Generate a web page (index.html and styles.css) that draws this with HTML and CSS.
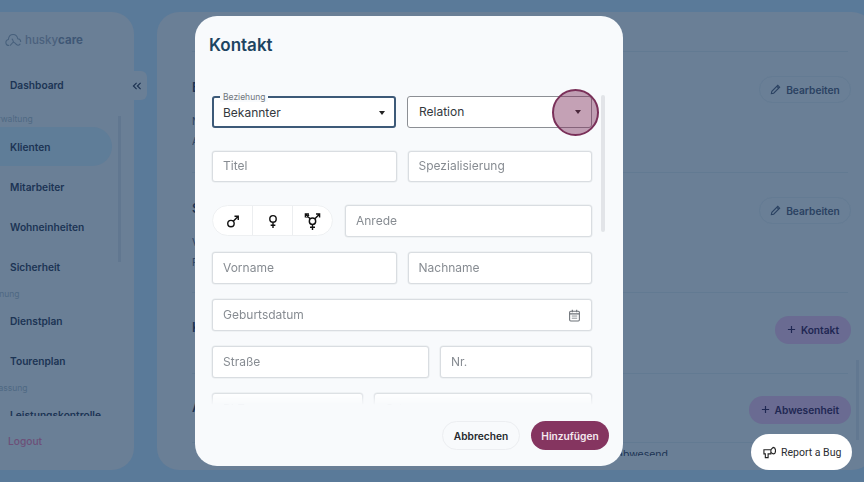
FILE: index.html
```html
<!DOCTYPE html>
<html lang="de">
<head>
    <meta charset="UTF-8">
    <meta name="viewport" content="width=device-width, initial-scale=1.0">
    <title>huskycare - Kontakt</title>
    <link rel="stylesheet" href="styles.css">
</head>
<body>

    <div class="shell">
        <aside class="sidebar">
            <div class="logo">
                <svg class="logo-icon" viewBox="0 0 20 16" fill="none" stroke="#47607c" stroke-width="1.2">
                    <path d="M5 14.5c-2.5 0-4-1.7-4-3.7 0-1.9 1.3-3.2 3-3.5C4.400 4 6.500 1.500 9.500 1.500c3 0 5 2 5.500 5 2 .2 3.500 1.700 3.500 3.800"/>
                    <path d="M6 14.500c1.500-1 2-3 4-4 2 .5 2.500 2.500 4.500 3.500 1.500.5 3-.5 3.500-1.500"/>
                    <path d="M8 6.500c1 .5 1.500 2 2 4"/>
                </svg>
                <span class="logo-text">husky<b>care</b></span>
            </div>
            <nav class="nav">
                <a class="nav-item">Dashboard</a>
                <div class="nav-label first">Verwaltung</div>
                <a class="nav-item active">Klienten</a>
                <a class="nav-item">Mitarbeiter</a>
                <a class="nav-item">Wohneinheiten</a>
                <a class="nav-item">Sicherheit</a>
                <div class="nav-label">Planung</div>
                <a class="nav-item">Dienstplan</a>
                <a class="nav-item">Tourenplan</a>
                <div class="nav-label">Erfassung</div>
                <a class="nav-item">Leistungskontrolle</a>
            </nav>
            <a class="logout">Logout</a>
            <div class="nav-scroll"></div>
            <div class="collapse">
                <svg viewBox="0 0 12 10" fill="none" stroke="#1a3050" stroke-width="1.400">
                    <path d="M5.500 1 1.500 5l4 4M10.500 1l-4 4 4 4"/>
                </svg>
            </div>
        </aside>

        <main class="main">
            <div class="scroller">
                <section class="block block-top"></section>
                <section class="block block-a">
                    <div class="info">
                        <h2>Basisdaten</h2>
                        <p>Name</p>
                        <p>Adresse</p>
                    </div>
                    <button class="btn-edit">
                        <svg viewBox="0 0 12 12" fill="none" stroke="#2b4262" stroke-width="1.200"><path d="M1.500 10.500 2 8 8.500 1.500l2 2L4 10z"/><path d="M7.500 2.500l2 2"/></svg>
                        Bearbeiten
                    </button>
                </section>
                <section class="block block-a">
                    <div class="info">
                        <h2>Stammdaten</h2>
                        <p>Versicherung</p>
                        <p>Pflegegrad</p>
                    </div>
                    <button class="btn-edit">
                        <svg viewBox="0 0 12 12" fill="none" stroke="#2b4262" stroke-width="1.200"><path d="M1.500 10.500 2 8 8.500 1.500l2 2L4 10z"/><path d="M7.500 2.500l2 2"/></svg>
                        Bearbeiten
                    </button>
                </section>
                <section class="block block-b">
                    <div class="info">
                        <h2>Kontakte</h2>
                    </div>
                    <button class="btn-add">
                        <svg viewBox="0 0 10 10" fill="none" stroke="#1f2752" stroke-width="1.300"><path d="M5 1v8M1 5h8"/></svg>
                        Kontakt
                    </button>
                </section>
                <section class="block block-c">
                    <div class="info">
                        <h2>Abwesenheiten</h2>
                    </div>
                    <button class="btn-add">
                        <svg viewBox="0 0 10 10" fill="none" stroke="#1f2752" stroke-width="1.300"><path d="M5 1v8M1 5h8"/></svg>
                        Abwesenheit
                    </button>
                </section>
                <div class="absent-row">abwesend</div>
            </div>
            <div class="main-scroll"></div>
        </main>
    </div>

    <div class="modal">
        <h1>Kontakt</h1>
        <div class="form">
            <div class="row row-first">
                <div class="field select focused">
                    <span class="legend">Beziehung</span>
                    <span>Bekannter</span>
                    <i class="caret"></i>
                </div>
                <div class="field select filled">
                    <span>Relation</span>
                    <i class="caret"></i>
                </div>
            </div>
            <div class="row row-second">
                <div class="field">Titel</div>
                <div class="field">Spezialisierung</div>
            </div>
            <div class="row row-third">
                <div class="gender">
                    <button>
                        <svg viewBox="0 0 24 24" fill="none" stroke="#111" stroke-width="2.400"><circle cx="8.500" cy="15.500" r="5.500"/><path d="M12.500 11.500 21 3M14.500 3H21v6.500"/></svg>
                    </button>
                    <button>
                        <svg viewBox="0 0 24 24" fill="none" stroke="#111" stroke-width="2.400"><circle cx="12" cy="7.500" r="5.500"/><path d="M12 13v10M8 18.500h8"/></svg>
                    </button>
                    <button>
                        <svg viewBox="0 0 24 24" fill="none" stroke="#111" stroke-width="2"><circle cx="12" cy="11.500" r="4.500"/><path d="M9 8.500 3 2.500M2 6.500V1.500h5M15 8.500l6-6M17 1.500h5v5M12 16v8M8.500 20h7M3.500 6.500 7 3"/></svg>
                    </button>
                </div>
                <div class="field">Anrede</div>
            </div>
            <div class="row">
                <div class="field">Vorname</div>
                <div class="field">Nachname</div>
            </div>
            <div class="row">
                <div class="field date">
                    <span>Geburtsdatum</span>
                    <svg viewBox="0 0 12 12" fill="none" stroke="#6d7278" stroke-width="1"><rect x="1.500" y="2" width="9" height="9" rx="1"/><path d="M1.500 4.500h9M4 .8v2.200M8 .8v2.200"/><path d="M3.500 6.500h5M3.500 8.500h5" stroke-width=".7"/></svg>
                </div>
            </div>
            <div class="row">
                <div class="field street">Straße</div>
                <div class="field nr">Nr.</div>
            </div>
            <div class="row">
                <div class="field plz">PLZ</div>
                <div class="field">Ort</div>
            </div>
        </div>
        <div class="form-scroll"></div>
        <div class="modal-foot">
            <button class="btn-cancel">Abbrechen</button>
            <button class="btn-save">Hinzufügen</button>
        </div>
        <div class="highlight"></div>
    </div>

    <button class="report">
        <svg viewBox="0 0 14 14" fill="none" stroke="#222" stroke-width="1.200"><path d="M1 4h7.500v4.500H5.500V12.500H2.500V8.500H1z"/><path d="M8.500 4 11 1.500c1.500 0 2.500 1.500 2.500 3.500s-1 3.500-2.500 3.500L8.500 7"/></svg>
        Report a Bug
    </button>

</body>
</html>
```

FILE: styles.css
```css
* {
    box-sizing: border-box;
}
html, body {
    margin: 0;
    height: 100%;
}
body {
    position: relative;
    width: 864px;
    height: 482px;
    overflow: hidden;
    background-color: #5a7a99;
    font-family: Inter, "Liberation Sans", sans-serif;
}
button {
    font-family: inherit;
    cursor: pointer;
}
.shell {
    display: flex;
    gap: 23px;
    width: 904px;
    height: 458px;
    margin: 12px 0 0 -30px;
}

/* sidebar */
.sidebar {
    position: relative;
    flex: 0 0 164px;
    display: flex;
    flex-direction: column;
    padding: 18px 0 0 40px;
    background-color: #6a7f96;
    border-radius: 22px;
}
.logo {
    display: flex;
    align-items: center;
    gap: 3px;
    height: 20px;
    margin-left: -5px;
}
.logo-icon {
    width: 17px;
    height: 14px;
}
.logo-text {
    font-size: 11.500px;
    font-weight: 500;
    color: #4a617d;
}
.logo-text b {
    font-weight: 700;
    color: #3f5775;
}
.nav {
    flex: 0 0 351px;
    margin: 15px 0 0 -40px;
    overflow: hidden;
}
.nav-item {
    display: flex;
    align-items: center;
    height: 40px;
    padding-left: 40px;
    font-size: 10.200px;
    font-weight: 600;
    color: #1c3454;
}
.nav-item.active {
    width: 142px;
    height: 39px;
    margin-bottom: 1px;
    background-color: #5f7d98;
    border-radius: 0 20px 20px 0;
}
.nav-label {
    height: 14px;
    display: flex;
    align-items: center;
    padding-left: 17px;
    font-size: 8.500px;
    color: #4f6983;
    white-space: nowrap;
}
.nav-label.first {
    margin: 7px 0 1px;
}
.logout {
    margin: 19px 0 0 -2px;
    font-size: 10.200px;
    font-weight: 500;
    color: #6d4f78;
}
.nav-scroll {
    position: absolute;
    left: 148px;
    top: 104px;
    width: 3px;
    height: 146px;
    background-color: #617790;
}
.collapse {
    position: absolute;
    left: 157px;
    top: 59px;
    width: 20px;
    height: 29px;
    display: flex;
    align-items: center;
    justify-content: center;
    background-color: #6a7f96;
    border-radius: 0 6px 6px 0;
}
.collapse svg {
    width: 10px;
    height: 8px;
}

/* main panel */
.main {
    position: relative;
    flex: 1;
    padding-left: 35px;
    background-color: #6a7f96;
    border-radius: 22px;
}
.scroller {
    width: 662px;
    height: 445px;
    overflow: hidden;
}
.block {
    display: flex;
    justify-content: space-between;
    align-items: flex-start;
    width: 656px;
    border-bottom: 1px solid #627a92;
}
.block-top {
    height: 40px;
}
.block-a {
    height: 121px;
    padding-top: 24px;
}
.block-a:nth-child(3) {
    height: 120px;
}
.block-b {
    height: 81px;
    padding-top: 23px;
}
.block-c {
    height: 69px;
    padding-top: 22px;
}
.info h2 {
    margin: 3px 0 20px;
    font-size: 13px;
    font-weight: 600;
    color: #1c3454;
}
.info p {
    margin: 0 0 8px;
    font-size: 10px;
    color: #2b4262;
}
.block button {
    display: flex;
    align-items: center;
    justify-content: center;
    gap: 5px;
    height: 28px;
    margin-right: -3px;
    padding-bottom: 1px;
    border-radius: 14px;
    font-size: 10.200px;
    font-weight: 600;
    white-space: nowrap;
}
.btn-edit {
    width: 92px;
    background-color: #6a7f96;
    border: 1px solid #647b93;
    color: #2b4262;
}
.block .btn-edit {
    height: 27px;
}
.btn-edit svg {
    width: 11px;
    height: 11px;
}
.btn-add {
    padding: 0 12px;
    background-color: #6a6b92;
    border: none;
    color: #1f2752;
}
.btn-add svg {
    width: 9px;
    height: 9px;
}
.absent-row {
    padding: 3px 0 0 425px;
    height: 13px;
    overflow: hidden;
    font-size: 10.500px;
    line-height: 17px;
    color: #1c3454;
}
.main-scroll {
    position: absolute;
    left: 699px;
    top: 348px;
    width: 3px;
    height: 80px;
    background-color: #627891;
}

/* modal */
.modal {
    position: absolute;
    left: 195px;
    top: 16px;
    width: 428px;
    height: 450px;
    display: flex;
    flex-direction: column;
    background-color: #f8fafc;
    border-radius: 22px;
}
.modal h1 {
    margin: 18px 0 0 14px;
    height: 22px;
    font-size: 17px;
    line-height: 22px;
    font-weight: 600;
    color: #1d4461;
}
.form {
    flex: 0 0 349px;
    padding: 40px 31px 0 17px;
    overflow: hidden;
    -webkit-mask-image: linear-gradient(to bottom, #000 336px, transparent 349px);
    mask-image: linear-gradient(to bottom, #000 336px, transparent 349px);
}
.row {
    display: flex;
    gap: 11px;
    margin-bottom: 15px;
}
.row-first, .row-second {
    margin-bottom: 23px;
}
.field {
    position: relative;
    flex: 1;
    display: flex;
    align-items: center;
    justify-content: space-between;
    height: 32px;
    padding: 0 10px 2px;
    background-color: #fff;
    border: 1px solid #d9dde1;
    border-radius: 3px;
    box-shadow: 0 0 0 .5px #e6e9ec;
    font-size: 12px;
    color: #878c92;
}
.row-second .field {
    height: 31px;
}
.field svg {
    width: 13px;
    height: 13px;
    margin-top: 2px;
}
.select {
    color: #33383d;
}
.focused {
    border: 2px solid #3d5a78;
    box-shadow: none;
    padding: 1px 9px 0;
}
.filled {
    border-color: #8c8f94;
    box-shadow: none;
    padding-left: 11px;
}
.filled .caret {
    margin-top: 2px;
}
.legend {
    position: absolute;
    left: 6px;
    top: -6px;
    padding: 0 3px;
    background-color: #f8fafc;
    font-size: 8.500px;
    line-height: 10px;
    color: #70767c;
}
.caret {
    width: 0;
    height: 0;
    border: 3.500px solid transparent;
    border-top: 4px solid #222;
    border-bottom: 0;
}
.gender {
    flex: 0 0 121px;
    display: flex;
    height: 31px;
    margin-right: 1px;
    background-color: #fff;
    border: 1px solid #eef0f2;
    border-radius: 16px;
    overflow: hidden;
}
.gender button {
    flex: 1;
    display: flex;
    align-items: center;
    justify-content: center;
    padding: 0;
    background: none;
    border: none;
    border-right: 1px solid #eceef0;
}
.gender button:last-child {
    border-right: none;
}
.gender svg {
    width: 14px;
    height: 15px;
    margin-top: 2px;
}
.gender button:last-child svg {
    width: 17px;
    height: 17px;
    margin-top: 1px;
}
.street {
    flex: 0 0 217px;
}
.plz {
    flex: 0 0 151px;
}
.form-scroll {
    position: absolute;
    left: 406px;
    top: 79px;
    width: 4px;
    height: 137px;
    background-color: #e2e4e8;
    border-radius: 2px;
}
.modal-foot {
    display: flex;
    justify-content: flex-end;
    align-items: center;
    gap: 11px;
    padding: 16px 14px 0 0;
}
.modal-foot button {
    width: 78px;
    height: 29px;
    padding: 0;
    border-radius: 15px;
    font-size: 10.200px;
    font-weight: 600;
}
.btn-cancel {
    background-color: #f8fafc;
    border: 1px solid #eceef1;
    color: #26292d;
}
.btn-save {
    background-color: #853560;
    border: none;
    color: #f5e9ef;
}
.highlight {
    position: absolute;
    left: 357px;
    top: 73px;
    width: 47px;
    height: 47px;
    background-color: rgba(125, 46, 90, .45);
    border: 2px solid #7a3059;
    border-radius: 50%;
}
.report {
    position: absolute;
    left: 751px;
    top: 434px;
    width: 101px;
    height: 36px;
    display: flex;
    align-items: center;
    gap: 5px;
    padding: 0 0 0 12px;
    background-color: #fff;
    border: none;
    border-radius: 18px;
    font-family: Roboto, sans-serif;
    font-size: 10.500px;
    color: #2a2c30;
}
.report svg {
    width: 13px;
    height: 13px;
}
```
